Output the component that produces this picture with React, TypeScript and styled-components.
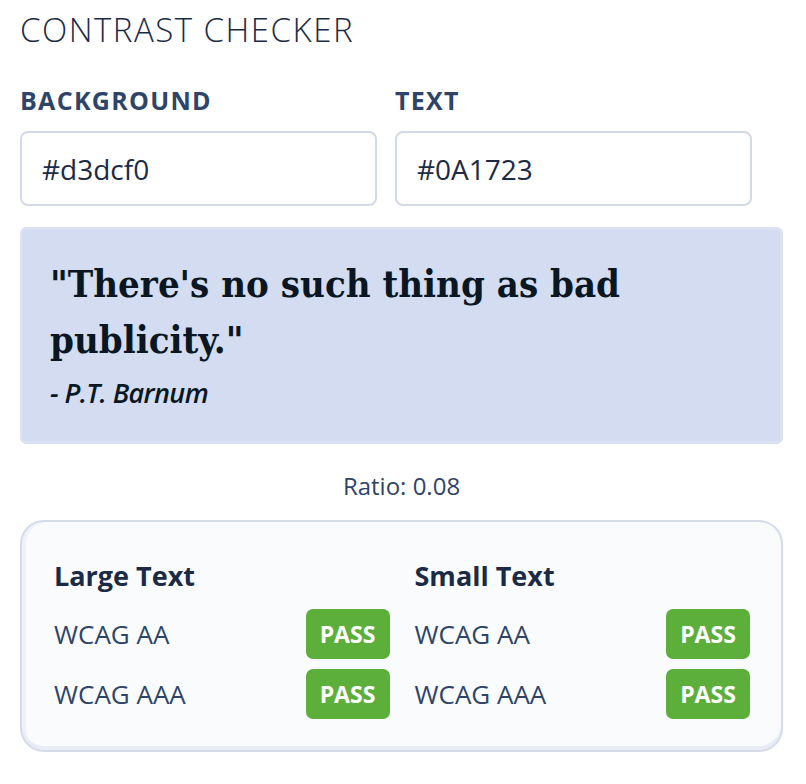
import React from "react";
import styled, { createGlobalStyle } from "styled-components";

const GlobalStyle = createGlobalStyle`
  html, body {
    margin: 0;
    padding: 0;
    background: #ffffff;
  }
  body {
    font-family: "Open Sans", "Noto Sans", sans-serif;
    color: #1c2b45;
  }
`;

const Page = styled.div`
  width: 763px;
  padding: 9px 0 0 20px;
  display: flex;
  flex-direction: column;
`;

const Title = styled.h1`
  margin: 0;
  font-size: 33px;
  font-weight: 300;
  letter-spacing: 1.5px;
  line-height: 42px;
  color: #1c2b45;
`;

const Fields = styled.div`
  display: flex;
  gap: 18px;
  margin-top: 34px;
`;

const Field = styled.label`
  display: flex;
  flex-direction: column;
  width: 357px;
`;

const FieldLabel = styled.span`
  font-size: 25px;
  font-weight: 700;
  letter-spacing: 1.3px;
  line-height: 30px;
  color: #2e4468;
`;

const Input = styled.input`
  margin-top: 16px;
  box-sizing: border-box;
  height: 75px;
  width: 100%;
  padding: 0 20px;
  border: 2px solid #d3dae5;
  border-radius: 8px;
  background: #ffffff;
  font-family: "Open Sans", sans-serif;
  font-size: 28px;
  color: #1c2b45;
  outline: none;
`;

const Preview = styled.div<{ $bg: string; $fg: string }>`
  margin-top: 21px;
  box-sizing: border-box;
  height: 217px;
  padding: 29px 30px;
  background: ${({ $bg }) => $bg};
  color: ${({ $fg }) => $fg};
  border-radius: 7px;
  box-shadow: inset 0 0 0 3px #dbe1f2;
`;

const Quote = styled.p`
  margin: 0;
  font-family: "DejaVu Serif Condensed", "DejaVu Serif", "Liberation Serif", serif;
  font-stretch: condensed;
  font-size: 38px;
  font-weight: 700;
  line-height: 56px;
`;

const Author = styled.p`
  margin: 9px 0 0;
  font-size: 27px;
  font-style: italic;
  font-weight: 600;
  letter-spacing: -0.6px;
  line-height: 32px;
`;

const Ratio = styled.div`
  margin-top: 26px;
  text-align: center;
  font-size: 24px;
  line-height: 32px;
  color: #2e4468;
`;

const Results = styled.div`
  margin-top: 18px;
  box-sizing: border-box;
  padding: 37px 31px 31px 32px;
  display: grid;
  grid-template-columns: 1fr 1fr;
  column-gap: 25px;
  background: #fafbfd;
  border: 2px solid #d4dbea;
  border-radius: 24px;
  box-shadow: inset 0 -4px 0 #e8ecf6, inset 4px 0 0 #eef1f8;
`;

const Column = styled.div`
  display: flex;
  flex-direction: column;
  gap: 10px;
`;

const ColumnTitle = styled.h2`
  margin: 0 0 6px;
  font-size: 27px;
  font-weight: 700;
  line-height: 34px;
  color: #1c2b45;
`;

const Row = styled.div`
  display: flex;
  align-items: center;
  justify-content: space-between;
  height: 50px;
`;

const Level = styled.span`
  font-size: 26px;
  line-height: 32px;
  color: #2e4468;
`;

const Badge = styled.span<{ $pass: boolean }>`
  display: flex;
  align-items: center;
  justify-content: center;
  width: 84px;
  height: 50px;
  border-radius: 7px;
  background: ${({ $pass }) => ($pass ? "#5daf3c" : "#d64545")};
  color: #ffffff;
  font-size: 23px;
  font-weight: 700;
`;

const groups = [
  { title: "Large Text", rows: [{ level: "WCAG AA", pass: true }, { level: "WCAG AAA", pass: true }] },
  { title: "Small Text", rows: [{ level: "WCAG AA", pass: true }, { level: "WCAG AAA", pass: true }] },
];

export default function App() {
  const bg = "#d3dcf0";
  const fg = "#0A1723";
  return (
    <>
      <GlobalStyle />
      <Page>
        <Title>CONTRAST CHECKER</Title>
        <Fields>
          <Field>
            <FieldLabel>BACKGROUND</FieldLabel>
            <Input defaultValue={bg} />
          </Field>
          <Field>
            <FieldLabel>TEXT</FieldLabel>
            <Input defaultValue={fg} />
          </Field>
        </Fields>
        <Preview $bg={bg} $fg={fg}>
          <Quote>"There's no such thing as bad publicity."</Quote>
          <Author>- P.T. Barnum</Author>
        </Preview>
        <Ratio>Ratio: 0.08</Ratio>
        <Results>
          {groups.map((g) => (
            <Column key={g.title}>
              <ColumnTitle>{g.title}</ColumnTitle>
              {g.rows.map((r) => (
                <Row key={r.level}>
                  <Level>{r.level}</Level>
                  <Badge $pass={r.pass}>{r.pass ? "PASS" : "FAIL"}</Badge>
                </Row>
              ))}
            </Column>
          ))}
        </Results>
      </Page>
    </>
  );
}
